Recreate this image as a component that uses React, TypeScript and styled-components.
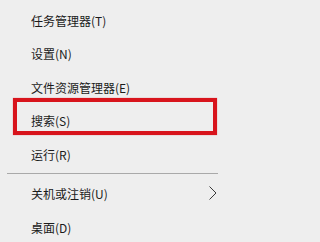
import React from "react";
import styled, { createGlobalStyle } from "styled-components";

const Global = createGlobalStyle`
  html, body { margin: 0; padding: 0; background: #eeeeee; }
  body { width: 228px; height: 242px; overflow: hidden; }
`;

const Menu = styled.div`
  width: 228px;
  height: 242px;
  box-sizing: border-box;
  padding-top: 4px;
  background: #eeeeee;
  display: flex;
  flex-direction: column;
  font-family: "Noto Sans CJK SC", "Noto Sans", sans-serif;
  font-size: 12px;
  color: #1b1b1b;
  overflow: hidden;
`;

const Item = styled.div<{ $marked?: boolean }>`
  position: relative;
  flex: 0 0 33.5px;
  height: 33.5px;
  display: flex;
  align-items: center;
  padding-left: 31px;
  padding-right: 11px;
  box-sizing: border-box;
  white-space: nowrap;
`;

const Label = styled.span`
  line-height: 1;
`;

const Highlight = styled.div`
  position: absolute;
  left: 13px;
  top: -6.5px;
  width: 204px;
  height: 37px;
  box-sizing: border-box;
  border: 4px solid #d8141c;
  box-shadow: 0 0 1px rgba(216, 20, 28, 0.5);
  pointer-events: none;
`;

const Separator = styled.div`
  flex: 0 0 6px;
  display: flex;
  flex-direction: column;
  padding: 1px 10px 4px 7px;
  box-sizing: border-box;
  &::after {
    content: "";
    display: block;
    height: 1px;
    background: #a9a9a9;
  }
`;

const Chevron = styled.svg`
  margin-left: auto;
  width: 9px;
  height: 16px;
  flex: 0 0 auto;
  margin-top: -2px;
`;

type Entry = { label: string; marked?: boolean; submenu?: boolean } | "sep";

const entries: Entry[] = [
  { label: "任务管理器(T)" },
  { label: "设置(N)" },
  { label: "文件资源管理器(E)" },
  { label: "搜索(S)", marked: true },
  { label: "运行(R)" },
  "sep",
  { label: "关机或注销(U)", submenu: true },
  { label: "桌面(D)" },
];

export default function App() {
  return (
    <>
      <Global />
      <Menu>
        {entries.map((e, i) =>
          e === "sep" ? (
            <Separator key={i} />
          ) : (
            <Item key={i} $marked={e.marked}>
              <Label>{e.label}</Label>
              {e.submenu && (
                <Chevron viewBox="0 0 9 16">
                  <polyline
                    points="1.5,1.5 8,8 1.5,14.5"
                    fill="none"
                    stroke="#3a3a3a"
                    strokeWidth="1"
                  />
                </Chevron>
              )}
              {e.marked && <Highlight />}
            </Item>
          )
        )}
      </Menu>
    </>
  );
}
